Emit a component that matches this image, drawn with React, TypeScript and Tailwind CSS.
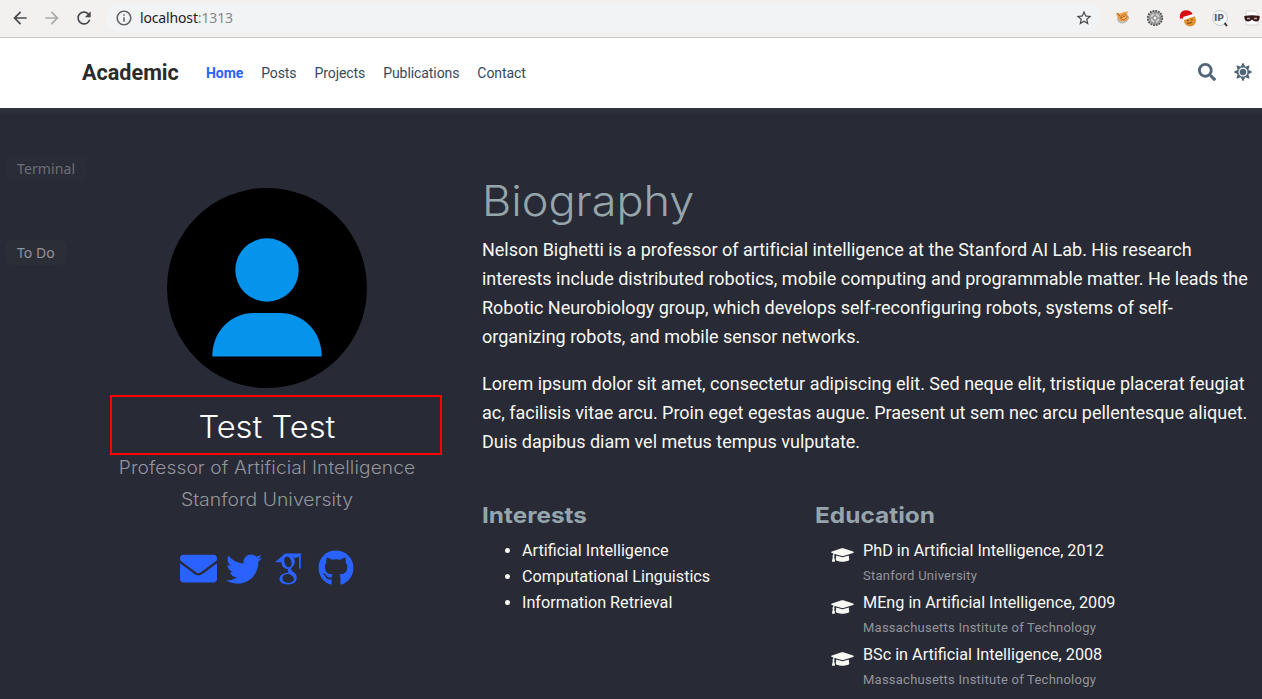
import { FaEnvelope, FaTwitter, FaGithub, FaGraduationCap, FaSearch, FaSun } from "react-icons/fa";
import { MdArrowBack, MdArrowForward, MdRefresh, MdInfoOutline, MdStarBorder } from "react-icons/md";

function Scholar() {
  return (
    <svg width="27" height="32" viewBox="0 0 27 32" className="text-[#2962ff]">
      <path fill="currentColor" d="M10 0.6H26.600L25.800 2.400V15.500H24V3.500L20 5.200L18 3.500Q20 7 19.800 9Q19.800 12 17.200 14Q15.600 15.400 16 16.600Q16.400 17.600 18.200 19Q21.800 21 21.800 24.800Q21.400 31.400 12.800 31.500Q4.600 31.200 4.500 26Q4.800 20.200 13.500 19.600Q12.200 18 12.900 16Q6.700 16 6.500 9.300L0 9.300ZM12 3.600C8.500 3.800 8.500 9 10.600 12.200C13.500 16 17 14 16.600 10C16 5.800 14.500 3.600 12 3.600ZM13.500 21C9 21 7.200 23 7.400 25.300C7.600 28.200 10 29.800 13.500 29.800C17 29.700 19.200 28.100 19 25.800C18.800 23.500 16 21.500 13.500 21Z" fillRule="evenodd" />
    </svg>
  );
}

function Fox() {
  return (
    <svg width="16" height="16" viewBox="0 0 16 16">
      <path d="M2 8C2 12 5 14 8 13.500C12 13 14 10 14 6L9 7Z" fill="#b9c0c0" />
      <path d="M1 3L5 3.500L9 2L13 1.500L12 4L14 8L11 11L6 11.500L3 9Z" fill="#f0a04b" />
      <path d="M5 7L10 4L12 7L9 10L6 9Z" fill="#f8b55d" stroke="#b9631d" strokeWidth=".8" />
      <path d="M2 3L5 6M6 8L10 6" stroke="#87501f" strokeWidth=".8" />
    </svg>
  );
}

function Gear() {
  return (
    <svg width="18" height="18" viewBox="0 0 18 18">
      <circle cx="9" cy="9" r="7.200" fill="#b5b5b5" stroke="#555" strokeWidth="1.800" strokeDasharray="1.900 0.930" />
      <circle cx="9" cy="9" r="5.400" fill="#d0d0d0" stroke="#888" />
      <circle cx="9" cy="9" r="2.200" fill="#f5f5f5" stroke="#666" />
      <path d="M9 4V6M9 12V14M4 9H6M12 9H14" stroke="#777" />
    </svg>
  );
}

function SantaCookie() {
  return (
    <svg width="18" height="17" viewBox="0 0 18 17">
      <circle cx="11" cy="10.500" r="6" fill="#df9130" />
      <path d="M1 9Q0 2 5 .5Q12-.5 14 5L5 7L3 10Z" fill="#d90c12" />
      <path d="M4 7L14 4L15 6.500L5 10Z" fill="#fff" />
      <circle cx="2.500" cy="10" r="1.800" fill="#f5eeee" />
      <path d="M8 10.500h1.500M12 9.500h1.500M8 13q3 1 5-1" stroke="#71401c" fill="none" />
    </svg>
  );
}

function IpLens() {
  return (
    <svg width="18" height="18" viewBox="0 0 18 18">
      <circle cx="9" cy="9" r="7.500" fill="#f5f8fa" stroke="#c5cbd0" />
      <path d="M13.500 14L16 17" stroke="#444" strokeWidth="2" />
      <text x="3" y="12" fontSize="9" fontWeight="700" fontFamily="DejaVu Sans, sans-serif" fill="#58606a">IP</text>
    </svg>
  );
}

function Mask() {
  return (
    <svg width="16" height="16" viewBox="0 0 16 16">
      <path d="M2 1H11L14 4V15H2Z" fill="#fff" stroke="#d4d4d4" />
      <path d="M.3 6Q8 4.500 15.700 6Q16 12 11.500 11.500Q9 11 8 9.500Q7 11 4.500 11.500Q0 11.500 .3 6Z" fill="#3a1719" />
      <path d="M3 8.500H6M10 8.500H13" stroke="#b9aeae" strokeWidth="1.300" />
    </svg>
  );
}

const degrees = [
  ["PhD in Artificial Intelligence, 2012", "Stanford University"],
  ["MEng in Artificial Intelligence, 2009", "Massachusetts Institute of Technology"],
  ["BSc in Artificial Intelligence, 2008", "Massachusetts Institute of Technology"],
];

export default function App() {
  return (
    <div className="flex h-[699px] w-[1262px] flex-col overflow-hidden bg-[#282a36] font-['Roboto',sans-serif]">
      <div className="flex h-[38px] shrink-0 items-center border-b border-[#c8c8c8] bg-[#f2f1f0] pb-px text-[#47494c]">
        <MdArrowBack size={20} className="ml-[10px]" />
        <MdArrowForward size={20} className="ml-3 text-[#aaa]" />
        <MdRefresh size={20} className="ml-[12px]" />
        <div className="ml-[12px] flex h-7 w-[994px] shrink-0 items-center rounded-full bg-[#f1f3f4] pl-[9px] pr-[7px]">
          <MdInfoOutline size={18} className="text-[#5f6368]" />
          <div className="ml-[7px] flex-1 pb-px font-['Noto_Sans',sans-serif] text-[14px] tracking-[-0.150px] text-[#222]">localhost<span className="text-[#888]">:1313</span></div>
          <MdStarBorder size={18} />
        </div>
        <div className="ml-[15px] flex shrink-0 items-center gap-[14.800px]"><Fox /><Gear /><SantaCookie /><IpLens /><Mask /></div>
      </div>

      <nav className="flex h-[70px] shrink-0 items-center bg-white pl-[82px] pr-[10px] text-[14px] text-[#34495e]">
        <div className="w-[124px] pt-px text-[21.600px] font-bold text-[#2b2b2b]">Academic</div>
        <div className="flex flex-1 gap-[18px] tracking-[-0.080px]">
          <span className="font-bold text-[#2962ff]">Home</span>
          <span>Posts</span><span>Projects</span><span>Publications</span><span>Contact</span>
        </div>
        <FaSearch size={18} className="mb-[2px] text-[#52667a]" />
        <FaSun size={18} className="mb-[2px] ml-[18px] text-[#52667a]" />
      </nav>

      <main className="flex min-h-0 flex-1 bg-linear-to-b from-[#30333e] to-[#282a36] to-[8px]">
        <aside className="w-[110px] shrink-0 pl-[5px] pt-[48px] font-['Noto_Sans',sans-serif] text-[14px]">
          <div className="flex h-[25px] w-[82px] items-center rounded-md bg-[#2a2c37] pl-3 tracking-[0.100px] text-[#6d6f76]">Terminal</div>
          <div className="mt-[59px] flex h-[25px] w-[62px] items-center rounded-md bg-[#2b2d37] pl-3 text-[#92949a]">To Do</div>
        </aside>

        <section className="flex w-[332px] shrink-0 flex-col pt-[80px]">
          <svg width="200" height="200" viewBox="0 0 200 200" className="ml-[57px] shrink-0">
            <circle cx="100" cy="100" r="100" fill="#000" />
            <circle cx="100" cy="82" r="31.700" fill="#0593ec" />
            <path d="M45.300 168.500C45.300 143 64 125 87 125H113C136 125 154.700 143 154.700 168.500Z" fill="#0593ec" />
          </svg>
          <div className="mt-[7px] flex h-[60px] shrink-0 items-center justify-center border-2 border-[#f00] pr-[19px] pt-[4px] font-['Inter',sans-serif] text-[31px] font-light text-white"><span className="inline-block scale-x-[1.055]">Test Test</span></div>
          <div className="mr-[18px] text-center font-['Inter',sans-serif] text-[18px] font-light leading-8 text-[#93959b]">
            <div className="-mt-[3px] scale-x-[1.063] tracking-[0.100px]">Professor of Artificial Intelligence</div>
            <div className="scale-x-[1.078]">Stanford University</div>
          </div>
          <div className="ml-[70px] mt-[33px] flex items-center text-[#2962ff]">
            <FaEnvelope size={37} className="mt-px" />
            <FaTwitter size={36} className="ml-[9px] mt-px" />
            <div className="ml-[13px] mt-[2px]"><Scholar /></div>
            <FaGithub size={36} className="ml-[16px]" />
          </div>
        </section>

        <section className="ml-[40px] w-[770px] shrink-0 pt-[66px] text-[#f8f8f2]">
          <h1 className="h-[61px] origin-left scale-x-[1.072] pt-px font-['Inter',sans-serif] text-[42px] font-light leading-[52px] text-[#95a5ab]">Biography</h1>
          <div className="text-[18px] leading-[29px] tracking-[-0.008px]">
            <p>Nelson Bighetti is a professor of artificial intelligence at the Stanford AI Lab. His research<br />interests include distributed robotics, mobile computing and programmable matter. He leads the<br />Robotic Neurobiology group, which develops self-reconfiguring robots, systems of self-<br />organizing robots, and mobile sensor networks.</p>
            <p className="mt-[18px]">Lorem ipsum dolor sit amet, consectetur adipiscing elit. Sed neque elit, tristique placerat feugiat<br />ac, facilisis vitae arcu. Proin eget egestas augue. Praesent ut sem nec arcu pellentesque aliquet.<br />Duis dapibus diam vel metus tempus vulputate.</p>
          </div>
          <div className="mt-[43px] flex">
            <div className="w-[333px]">
              <h2 className="h-[39px] origin-left scale-x-[1.106] font-['Inter',sans-serif] text-[22px] font-bold leading-[32px] text-[#95a5ab]">Interests</h2>
              <ul className="list-disc pl-[40px] text-[16.200px] leading-[26px]"><li>Artificial Intelligence</li><li>Computational Linguistics</li><li>Information Retrieval</li></ul>
            </div>
            <div>
              <h2 className="h-[39px] origin-left scale-x-[1.110] font-['Inter',sans-serif] text-[22px] font-bold leading-[32px] text-[#95a5ab]">Education</h2>
              {degrees.map(([degree, school]) => (
                <div key={degree} className="flex h-[52px] pl-[16px]">
                  <FaGraduationCap className="mt-[8px] h-[18px] w-[23px]" />
                  <div className="ml-[9px]">
                    <div className="text-[16.200px] leading-[26px]">{degree}</div>
                    <div className="text-[13px] leading-[24px] tracking-[0.240px] text-[#93959b]">{school}</div>
                  </div>
                </div>
              ))}
            </div>
          </div>
        </section>
      </main>
    </div>
  );
}
